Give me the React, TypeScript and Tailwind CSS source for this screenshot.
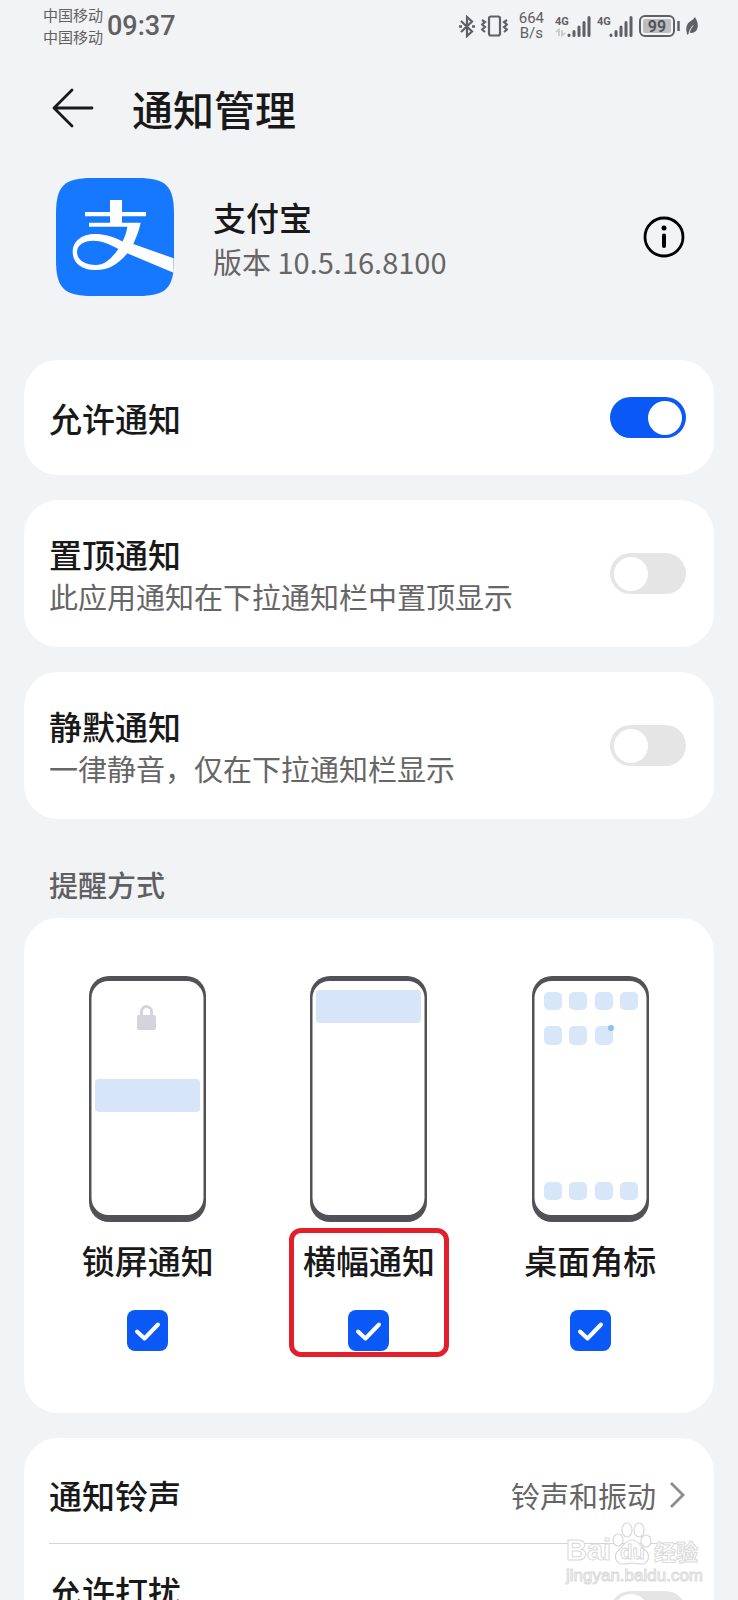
import { useState, type ReactNode } from "react";

function Bluetooth() {
  return (
    <svg width="16" height="23" viewBox="0 0 16 23" fill="none" stroke="#5f6063" strokeWidth="2.2">
      <path d="M2 6 L13 16.5 L8 21 V2 L13 6.5 L2 17" />
      <path d="M0 11.5 h3 M13 11.5 H16" strokeWidth="2.5" />
    </svg>
  );
}

function Vibrate() {
  return (
    <svg width="27" height="22" viewBox="0 0 27 22" fill="none" stroke="#5f6063" strokeWidth="2.2">
      <rect x="8" y="1.500" width="11" height="19" rx="2" />
      <path d="M1 5 l3 2 l-3 2.500 l3 2.500 l-3 2.500 l3 2.500" />
      <path d="M26 5 l-3 2 l3 2.500 l-3 2.500 l3 2.500 l-3 2.500" />
    </svg>
  );
}

function Signal({ data }: { data?: boolean }) {
  return (
    <svg width="36" height="23" viewBox="0 0 36 23">
      <text x="0" y="10" fontSize="11" fontWeight="700" fontFamily="Roboto, sans-serif" fill="#5f6063">
        4G
      </text>
      {data && <path d="M1 17 l3 -2.5 V21 M7 15 V20.5 l3 -2.5" fill="none" stroke="#c4c5c7" strokeWidth="1.6" />}
      <path
        d="M14 20 v0.5 M19 16.5 V20.5 M24 12 V20.5 M29 7.5 V20.5 M34 2.5 V20.5"
        stroke="#5f6063"
        strokeWidth="3"
        strokeLinecap="round"
      />
    </svg>
  );
}

function Battery() {
  return (
    <svg width="41" height="22" viewBox="0 0 41 22">
      <rect x="1" y="1" width="34" height="20" rx="5" fill="none" stroke="#5f6063" strokeWidth="2" />
      <rect x="4" y="4" width="28" height="14" rx="2" fill="#bcbdbf" />
      <path d="M39.5 6 V16" stroke="#5f6063" strokeWidth="2.5" />
      <text x="18" y="17" textAnchor="middle" fontSize="16" fontWeight="600" fontFamily="Roboto, sans-serif" fill="#505154">
        99
      </text>
    </svg>
  );
}

function Leaf() {
  return (
    <svg width="12" height="20" viewBox="0 0 12 20">
      <path d="M9 1 C12 6 13 11 10 15 C8 17 5 17.5 3.5 16.5 L1.5 19 C0 15 -1 9 4 5.5 C6 4 8 3 9 1 Z" fill="#5f6063" />
      <path d="M3 17 C4 14 5 12 7 9.5" stroke="#f2f3f5" strokeWidth="1" fill="none" />
    </svg>
  );
}

function StatusBar() {
  return (
    <div className="flex h-[52px] items-center pl-[43px] pr-10 text-[#5f6063]">
      <div className="text-[15px] leading-[22px]">
        <p>中国移动</p>
        <p>中国移动</p>
      </div>
      <span className="ml-1 font-[Roboto] text-[27px] leading-8 font-medium">09:37</span>
      <div className="ml-auto flex items-center">
        <Bluetooth />
        <span className="ml-1.5">
          <Vibrate />
        </span>
        <div className="mx-[11px] text-center font-[Roboto] text-[15px] leading-[15px]">
          <p>664</p>
          <p>B/s</p>
        </div>
        <Signal data />
        <span className="mx-1.5">
          <Signal />
        </span>
        <Battery />
        <span className="ml-1.5">
          <Leaf />
        </span>
      </div>
    </div>
  );
}

function AlipayLogo() {
  return (
    <svg width="118" height="118" viewBox="0 0 118 118" className="shrink-0">
      <path d="M0 36 C0 8 8 0 36 0 H82 C110 0 118 8 118 36 V82 C118 110 110 118 82 118 H36 C8 118 0 110 0 82 Z" fill="#1677ff" />
      <path d="M54 22 H66 V34 H90 V38.3 H66 V45 H54 V38.3 H29 V34 H54 Z" fill="#fff" />
      <path
        fill="#fff"
        fillRule="evenodd"
        d="M84.7 44.7 H33 V48.7 H71.3 C70.5 54 69 59 66.5 63.5 C56 58 48 56 39 56 C26 56 16.7 63 16.7 74 C16.7 85 26 92 39 92 C54 92 62 86 71.3 75.3 L117.6 94.7 V80.3 L77.3 66 C80 60 83 53 84.7 44.7 Z M62.3 71 C54 66 45 62.7 37.3 62.7 C28 62.7 21 67 21 74 C21 82 29 87 40 87 C49 87 56 80 62.3 71 Z"
      />
    </svg>
  );
}

function Toggle({ id, initial = false }: { id: string; initial?: boolean }) {
  const [on, setOn] = useState(initial);
  return (
    <input
      id={id}
      type="checkbox"
      role="switch"
      checked={on}
      onChange={() => setOn(!on)}
      className="flex h-[41px] w-[76px] shrink-0 appearance-none items-center rounded-full bg-[#e5e5e5] px-1 before:size-[34px] before:rounded-full before:bg-white checked:justify-end checked:bg-[#0a59f7]"
    />
  );
}

function SwitchCard({ id, title, desc }: { id: string; title: string; desc: string }) {
  return (
    <section className="flex h-[147px] items-center justify-between rounded-[34px] bg-white pr-7 pl-[25px]">
      <label htmlFor={id}>
        <span className="block text-[33px] leading-[44px] font-medium">{title}</span>
        <span className="block text-[29px] leading-10 text-[#666]">{desc}</span>
      </label>
      <Toggle id={id} />
    </section>
  );
}

function Phone({ children }: { children?: ReactNode }) {
  return (
    <svg width="117" height="246" viewBox="0 0 117 246">
      <rect width="117" height="246" rx="20" fill="#515157" />
      <rect x="2.5" y="5" width="112" height="234" rx="17" fill="#fff" />
      {children}
    </svg>
  );
}

function LockPhone() {
  return (
    <Phone>
      <rect x="6" y="103" width="105" height="33" rx="4" fill="#d6e6f8" />
      <rect x="48" y="39" width="19" height="15" rx="2" fill="#d5d4dd" />
      <path d="M52.500 40 V35.500 a5 5 0 0 1 10 0 V40" fill="none" stroke="#d5d4dd" strokeWidth="3" />
    </Phone>
  );
}

function BannerPhone() {
  return (
    <Phone>
      <rect x="6" y="14" width="105" height="33" rx="4" fill="#d6e6f8" />
    </Phone>
  );
}

function BadgePhone() {
  const xs = [12, 37, 63, 88];
  return (
    <Phone>
      {xs.map((x) => (
        <g key={x} fill="#d8e6f9">
          <rect x={x} y="16" width="18" height="18" rx="5" />
          {x < 88 && <rect x={x} y="50" width="18" height="19" rx="5" />}
          <rect x={x} y="206" width="18" height="18" rx="5" />
        </g>
      ))}
      <circle cx="79" cy="52" r="3" fill="#8cc1ea" />
    </Phone>
  );
}

function Check({ id }: { id: string }) {
  const [on, setOn] = useState(true);
  return (
    <span className="grid size-[41px]">
      <input
        id={id}
        type="checkbox"
        checked={on}
        onChange={() => setOn(!on)}
        className="col-start-1 row-start-1 size-[41px] appearance-none rounded-lg border-2 border-[#999] checked:border-0 checked:bg-[#0a59f7]"
      />
      {on && (
        <svg
          viewBox="0 0 41 41"
          className="pointer-events-none col-start-1 row-start-1 size-[41px]"
          fill="none"
          stroke="#fff"
          strokeWidth="4"
          strokeLinecap="round"
          strokeLinejoin="round"
        >
          <path d="M10 21.5 L17.5 28.5 L31 14.5" />
        </svg>
      )}
    </span>
  );
}

const modes = [
  { id: "lock", title: "锁屏通知", art: <LockPhone /> },
  { id: "banner", title: "横幅通知", art: <BannerPhone />, marked: true },
  { id: "badge", title: "桌面角标", art: <BadgePhone /> },
];

function Watermark() {
  return (
    <div className="pointer-events-none absolute right-10 bottom-3.5 w-[132px] font-[Liberation_Sans] text-white [-webkit-text-stroke:1px_#dadada]">
      <div className="flex items-end justify-between leading-8">
        <span className="text-[29px] font-bold">Bai</span>
        <span className="relative text-[20px] leading-7 font-bold">
          <svg width="40" height="44" viewBox="0 0 40 44" className="absolute -top-4 -left-2" fill="#fff" stroke="#d8d8d8" strokeWidth="1.2">
            <ellipse cx="6" cy="18" rx="5" ry="6" />
            <ellipse cx="15" cy="8" rx="5" ry="7" />
            <ellipse cx="27" cy="8" rx="5" ry="7" />
            <ellipse cx="34" cy="19" rx="5" ry="6" />
            <path d="M20 18 C27 18 28 24 33 28 C39 33 37 42 29 42 C24 42 22 41 20 41 C18 41 16 42 11 42 C3 42 1 33 7 28 C12 24 13 18 20 18 Z" />
          </svg>
          <span className="relative">du</span>
        </span>
        <span className="font-['Noto_Sans_CJK_SC'] text-[22px] font-bold">经验</span>
      </div>
      <p className="text-[17px] leading-5">jingyan.baidu.com</p>
    </div>
  );
}

export default function App() {
  return (
    <div className="relative h-screen overflow-hidden bg-[#f2f3f5] font-['Noto_Sans_CJK_SC',sans-serif] text-[#191919]">
      <StatusBar />

      <header className="flex h-28 items-center pl-[52px]">
        <button type="button" aria-label="返回">
          <svg width="42" height="40" viewBox="0 0 42 40" fill="none" stroke="#191919" strokeWidth="2.8" strokeLinecap="round" strokeLinejoin="round">
            <path d="M40 20 H2 M20 2 L2 20 L20 38" />
          </svg>
        </button>
        <h1 className="ml-[38px] text-[41px] leading-[56px] font-medium">通知管理</h1>
      </header>

      <section className="flex items-center pt-3.5 pr-[53px] pl-14">
        <AlipayLogo />
        <div className="ml-[39px] pt-1">
          <h2 className="text-[33px] leading-[44px] font-medium">支付宝</h2>
          <p className="text-[29px] leading-[44px] text-[#666]">版本 10.5.16.8100</p>
        </div>
        <button type="button" aria-label="应用信息" className="ml-auto">
          <svg width="42" height="42" viewBox="0 0 42 42" fill="none" stroke="#000" strokeWidth="2.8">
            <circle cx="21" cy="21" r="19" />
            <path d="M21 19.5 V30" strokeWidth="4" strokeLinecap="round" />
            <circle cx="21" cy="12" r="2.5" fill="#000" stroke="none" />
          </svg>
        </button>
      </section>

      <main className="mt-16 flex flex-col gap-[25px] px-6">
        <section className="flex h-[115px] items-center justify-between rounded-[34px] bg-white pr-7 pl-[25px]">
          <label htmlFor="allow" className="text-[33px] leading-[44px] font-medium">
            允许通知
          </label>
          <Toggle id="allow" initial />
        </section>

        <SwitchCard id="top" title="置顶通知" desc="此应用通知在下拉通知栏中置顶显示" />
        <SwitchCard id="silent" title="静默通知" desc="一律静音，仅在下拉通知栏显示" />

        <section>
          <h2 className="pt-5 pb-3.5 pl-[25px] text-[29px] leading-10 font-medium text-[#5f6063]">提醒方式</h2>
          <div className="grid grid-cols-3 rounded-[34px] bg-white px-[13px] pt-[58px] pb-[62px]">
            {modes.map((m) => (
              <div key={m.id} className="flex flex-col items-center">
                {m.art}
                <div className="relative mt-4 flex flex-col items-center gap-7">
                  <label htmlFor={m.id} className="text-[33px] leading-[44px] font-medium">
                    {m.title}
                  </label>
                  <Check id={m.id} />
                  {m.marked && (
                    <div className="pointer-events-none absolute -inset-x-3.5 -top-2.5 -bottom-1.5 rounded-xl border-5 border-[#e3202a]" />
                  )}
                </div>
              </div>
            ))}
          </div>
        </section>

        <section className="rounded-[34px] bg-white pt-2 pr-7 pl-[25px]">
          <a href="#sound" className="flex h-[98px] items-center border-b border-[#d4d4d4]">
            <span className="text-[33px] leading-[44px] font-medium">通知铃声</span>
            <span className="ml-auto text-[29px] leading-10 text-[#666]">铃声和振动</span>
            <svg width="18" height="28" viewBox="0 0 18 28" className="ml-3" fill="none" stroke="#8c8c8c" strokeWidth="2.8">
              <path d="M3 2 L15 14 L3 26" />
            </svg>
          </a>
          <div className="flex h-[134px] items-center justify-between">
            <label htmlFor="disturb" className="pb-10 text-[33px] leading-[44px] font-medium">
              允许打扰
            </label>
            <Toggle id="disturb" />
          </div>
        </section>
      </main>

      <Watermark />
    </div>
  );
}
